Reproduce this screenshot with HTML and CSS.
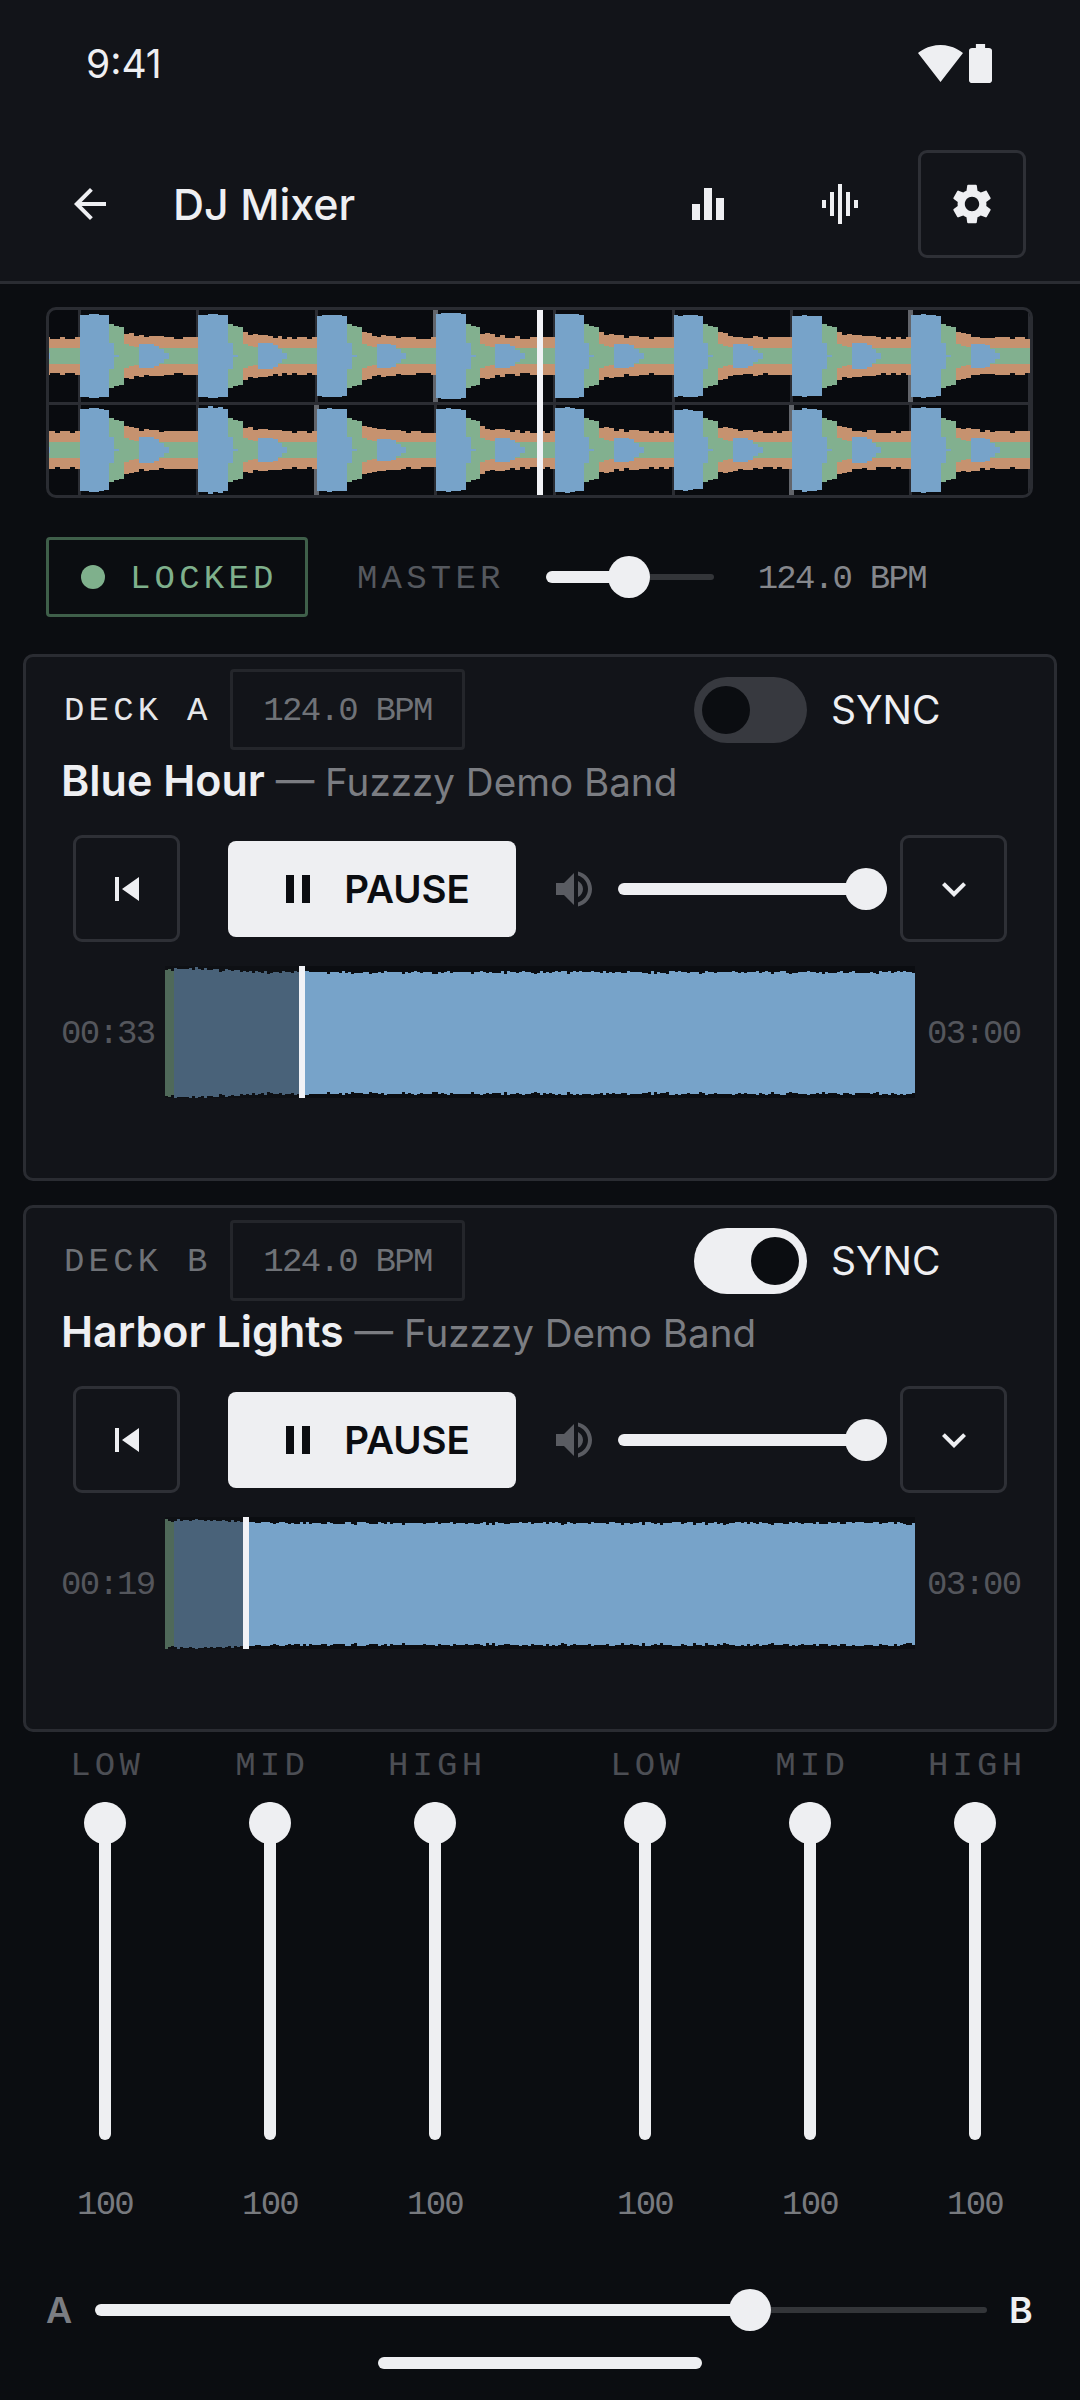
FILE: index.html
```html
<!DOCTYPE html>
<html lang="en">
<head>
    <meta charset="UTF-8">
    <title>DJ Mixer</title>
    <link rel="stylesheet" href="styles.css">
</head>
<body>
<div class="top">
    <div class="status">
        <span class="clock">9:41</span>
        <div class="status-icons">
            <svg class="wifi" viewBox="0.36 3 23.28 18.5" preserveAspectRatio="none"><path d="M12.01 21.49L23.64 7c-.45-.34-4.93-4-11.64-4C5.28 3 .81 6.66.36 7l11.63 14.49.01.01.01-.01z"/></svg>
            <svg class="battery" viewBox="7 2 10 20" preserveAspectRatio="none"><path d="M15.67 4H14V2h-4v2H8.33C7.6 4 7 4.6 7 5.33v15.33C7 21.4 7.6 22 8.33 22h7.33c.74 0 1.34-.6 1.34-1.33V5.33C17 4.6 16.4 4 15.67 4z"/></svg>
        </div>
    </div>
    <div class="appbar">
        <svg class="icon back" viewBox="0 0 24 24"><path d="M20 11H7.83l5.59-5.59L12 4l-8 8 8 8 1.41-1.41L7.83 13H20v-2z"/></svg>
        <h1 class="title">DJ Mixer</h1>
        <div class="icon-btn"><svg class="icon" viewBox="0 0 24 24"><path d="M10 20h4V4h-4v16zm-6 0h4v-8H4v8zM16 9v11h4V9h-4z"/></svg></div>
        <div class="icon-btn"><svg class="icon" viewBox="0 0 24 24"><path d="M7 18h2V6H7v12zm4 4h2V2h-2v20zm-8-8h2v-4H3v4zm12 4h2V6h-2v12zm4-8v4h2v-4h-2z"/></svg></div>
        <div class="icon-btn boxed"><svg class="icon" viewBox="0 0 24 24"><path d="M19.14 12.94c.04-.3.06-.61.06-.94 0-.32-.02-.64-.07-.94l2.03-1.58c.18-.14.23-.41.12-.61l-1.92-3.32c-.12-.22-.37-.29-.59-.22l-2.39.96c-.5-.38-1.03-.7-1.62-.94l-.36-2.54c-.04-.24-.24-.41-.48-.41h-3.84c-.24 0-.43.17-.47.41l-.36 2.54c-.59.24-1.13.57-1.62.94l-2.39-.96c-.22-.08-.47 0-.59.22L2.74 8.87c-.12.21-.08.47.12.61l2.03 1.58c-.05.3-.09.63-.09.94s.02.64.07.94l-2.03 1.58c-.18.14-.23.41-.12.61l1.92 3.32c.12.22.37.29.59.22l2.39-.96c.5.38 1.03.7 1.62.94l.36 2.54c.05.24.24.41.48.41h3.84c.24 0 .44-.17.47-.41l.36-2.54c.59-.24 1.13-.56 1.62-.94l2.39.96c.22.08.47 0 .59-.22l1.92-3.32c.12-.22.07-.47-.12-.61l-2.01-1.58zM12 15.6c-1.98 0-3.6-1.62-3.6-3.6s1.62-3.6 3.6-3.6 3.6 1.62 3.6 3.6-1.62 3.6-3.6 3.6z"/></svg></div>
    </div>
</div>

<div class="overview">
    <svg id="overview" viewBox="0 0 981 185"></svg>
    <div class="overview-head"></div>
</div>

<div class="lock-row">
    <div class="locked"><span class="dot"></span><span class="mono">LOCKED</span></div>
    <span class="mono master">MASTER</span>
    <div class="slider master-slider">
        <div class="fill" style="width:83px"></div><div class="rest"></div>
        <div class="thumb" style="left:83px"></div>
    </div>
    <span class="mono-plain master-bpm">124.0 BPM</span>
</div>

<!-- deck a -->
<div class="deck">
    <div class="deck-head">
        <span class="mono deck-name">DECK A</span>
        <div class="bpm-box mono-plain">124.0 BPM</div>
        <div class="toggle"><span class="knob"></span></div>
        <span class="sync">SYNC</span>
    </div>
    <div class="track"><strong>Blue Hour</strong> — Fuzzzy Demo Band</div>
    <div class="controls">
        <div class="square-btn"><svg class="icon" viewBox="0 0 24 24"><path d="M6 6h2v12H6zm3.5 6l8.5 6V6z"/></svg></div>
        <div class="pause"><svg class="icon" viewBox="0 0 24 24"><path d="M6 19h4V5H6v14zm8-14v14h4V5h-4z"/></svg><span>PAUSE</span></div>
        <svg class="icon vol" viewBox="0 0 24 24"><path d="M3 9v6h4l5 5V4L7 9H3zm13.5 3c0-1.77-1.02-3.29-2.5-4.03v8.05c1.48-.73 2.5-2.25 2.5-4.02zM14 3.23v2.06c2.89.86 5 3.54 5 6.71s-2.11 5.85-5 6.71v2.06c4.01-.91 7-4.49 7-8.77s-2.99-7.86-7-8.77z"/></svg>
        <div class="slider vol-slider">
            <div class="fill" style="width:100%"></div>
            <div class="thumb" style="left:248px"></div>
        </div>
        <div class="square-btn"><svg class="icon" viewBox="0 0 24 24"><path d="M16.59 8.59L12 13.17 7.41 8.59 6 10l6 6 6-6z"/></svg></div>
    </div>
    <div class="wave-row">
        <span class="mono-plain time">00:33</span>
        <div class="wave">
            <svg class="wave-svg" viewBox="0 0 750 132"></svg>
            <div class="played" style="width:134px"></div>
            <div class="playhead" style="left:134px"></div>
        </div>
        <span class="mono-plain time">03:00</span>
    </div>
</div>

<!-- deck b -->
<div class="deck deck-b">
    <div class="deck-head">
        <span class="mono deck-name">DECK B</span>
        <div class="bpm-box mono-plain">124.0 BPM</div>
        <div class="toggle on"><span class="knob"></span></div>
        <span class="sync">SYNC</span>
    </div>
    <div class="track"><strong>Harbor Lights</strong> — Fuzzzy Demo Band</div>
    <div class="controls">
        <div class="square-btn"><svg class="icon" viewBox="0 0 24 24"><path d="M6 6h2v12H6zm3.5 6l8.5 6V6z"/></svg></div>
        <div class="pause"><svg class="icon" viewBox="0 0 24 24"><path d="M6 19h4V5H6v14zm8-14v14h4V5h-4z"/></svg><span>PAUSE</span></div>
        <svg class="icon vol" viewBox="0 0 24 24"><path d="M3 9v6h4l5 5V4L7 9H3zm13.5 3c0-1.77-1.02-3.29-2.5-4.03v8.05c1.48-.73 2.5-2.25 2.5-4.02zM14 3.23v2.06c2.89.86 5 3.54 5 6.71s-2.11 5.85-5 6.71v2.06c4.01-.91 7-4.49 7-8.77s-2.99-7.86-7-8.77z"/></svg>
        <div class="slider vol-slider">
            <div class="fill" style="width:100%"></div>
            <div class="thumb" style="left:248px"></div>
        </div>
        <div class="square-btn"><svg class="icon" viewBox="0 0 24 24"><path d="M16.59 8.59L12 13.17 7.41 8.59 6 10l6 6 6-6z"/></svg></div>
    </div>
    <div class="wave-row">
        <span class="mono-plain time">00:19</span>
        <div class="wave">
            <svg class="wave-svg" viewBox="0 0 750 132"></svg>
            <div class="played" style="width:78px"></div>
            <div class="playhead" style="left:78px"></div>
        </div>
        <span class="mono-plain time">03:00</span>
    </div>
</div>

<div class="eq">
    <div class="eq-col"><span class="mono eq-label">LOW</span><div class="vslider"><span class="vthumb"></span></div><span class="mono-plain eq-val">100</span></div>
    <div class="eq-col"><span class="mono eq-label">MID</span><div class="vslider"><span class="vthumb"></span></div><span class="mono-plain eq-val">100</span></div>
    <div class="eq-col"><span class="mono eq-label">HIGH</span><div class="vslider"><span class="vthumb"></span></div><span class="mono-plain eq-val">100</span></div>
    <div class="eq-gap"></div>
    <div class="eq-col"><span class="mono eq-label">LOW</span><div class="vslider"><span class="vthumb"></span></div><span class="mono-plain eq-val">100</span></div>
    <div class="eq-col"><span class="mono eq-label">MID</span><div class="vslider"><span class="vthumb"></span></div><span class="mono-plain eq-val">100</span></div>
    <div class="eq-col"><span class="mono eq-label">HIGH</span><div class="vslider"><span class="vthumb"></span></div><span class="mono-plain eq-val">100</span></div>
</div>

<div class="xfade">
    <span class="xfade-a">A</span>
    <div class="slider xfade-slider">
        <div class="fill" style="width:655px"></div><div class="rest"></div>
        <div class="thumb" style="left:655px"></div>
    </div>
    <span class="xfade-b">B</span>
</div>

<div class="home-bar"></div>

<script src="wave.js"></script>
</body>
</html>
```

FILE: styles.css
```css
* {
    box-sizing: border-box;
}

html, body {
    margin: 0;
    padding: 0;
}

body {
    width: 1080px;
    height: 2400px;
    overflow: hidden;
    background-color: #0b0d11;
    color: #eeeff2;
    font-family: "Inter", "Liberation Sans", sans-serif;
}

svg {
    display: block;
    fill: currentColor;
}

.icon {
    width: 48px;
    height: 48px;
    flex: none;
}

.mono {
    padding-top: 3px;
    font-family: "Liberation Mono", monospace;
    font-size: 34px;
    letter-spacing: 4.2px;
}

.mono-plain {
    padding-top: 3px;
    font-family: "Liberation Mono", monospace;
    font-size: 34px;
    letter-spacing: -1.7px;
}

/* top */
.top {
    background-color: #121419;
    border-bottom: 3px solid #2a2c32;
}

.status {
    height: 126px;
    display: flex;
    align-items: center;
    justify-content: space-between;
    padding: 0 88px 0 86px;
}

.clock {
    font-size: 39px;
}

.status-icons {
    display: flex;
    align-items: center;
}

.wifi {
    width: 45px;
    height: 37px;
}

.battery {
    width: 23px;
    height: 39px;
    margin-left: 6px;
}

.appbar {
    height: 155px;
    display: flex;
    align-items: center;
    padding: 0 54px 0 66px;
}

.back {
    margin-right: 59px;
}

.title {
    flex: 1;
    margin: 0;
    font-size: 43px;
    font-weight: 500;
}

.icon-btn {
    width: 108px;
    height: 108px;
    margin-left: 24px;
    display: flex;
    align-items: center;
    justify-content: center;
    border: 3px solid transparent;
    border-radius: 9px;
}

.boxed {
    border-color: #2e3036;
}

/* overview */
.overview {
    position: relative;
    width: 987px;
    height: 191px;
    margin: 23px 0 0 46px;
    border: 3px solid #2a2c32;
    border-radius: 10px;
    overflow: hidden;
    background-color: #090b0f;
}

.overview svg {
    width: 981px;
    height: 185px;
}

.overview-head {
    position: absolute;
    top: 0;
    bottom: 0;
    left: 488px;
    width: 6px;
    background-color: #f1f2f6;
}

/* lock row */
.lock-row {
    display: flex;
    align-items: center;
    height: 80px;
    margin: 39px 0 0 46px;
}

.locked {
    width: 262px;
    height: 80px;
    display: flex;
    align-items: center;
    padding-left: 32px;
    border: 3px solid #3f5f4a;
    border-radius: 4px;
    color: #7fb08c;
}

.dot {
    width: 24px;
    height: 24px;
    border-radius: 50%;
    margin-right: 25px;
    background-color: #7fb08c;
}

.master {
    margin-left: 49px;
    color: #55585e;
}

.slider {
    position: relative;
    display: flex;
    align-items: center;
    height: 42px;
}

.fill {
    height: 12px;
    background-color: #eeeff2;
    border-radius: 6px;
}

.rest {
    flex: 1;
    height: 6px;
    background-color: #333539;
    border-radius: 3px;
}

.thumb {
    position: absolute;
    top: 0;
    width: 42px;
    height: 42px;
    margin-left: -21px;
    border-radius: 50%;
    background-color: #eeeff2;
}

.master-slider {
    width: 168px;
    margin-left: 41.5px;
}

.master-bpm {
    margin-left: 43.5px;
    color: #85878c;
}

/* deck */
.deck {
    height: 527px;
    margin: 37px 23px 0;
    padding-top: 12px;
    background-color: #121419;
    border: 3px solid #2a2c32;
    border-radius: 10px;
}

.deck-b {
    margin-top: 24px;
}

.deck-head {
    height: 81px;
    display: flex;
    align-items: center;
    padding-left: 38px;
}

.deck-name {
    width: 166px;
    flex: none;
    color: #e6e7ea;
}

.deck-b .deck-name {
    color: #6f7277;
}

.bpm-box {
    width: 235px;
    height: 81px;
    display: flex;
    align-items: center;
    justify-content: center;
    border: 3px solid #24262b;
    border-radius: 4px;
    color: #6f7277;
}

.toggle {
    width: 113px;
    height: 66px;
    margin-left: 229px;
    padding-left: 8px;
    display: flex;
    align-items: center;
    border-radius: 33px;
    background-color: #37393f;
}

.knob {
    width: 48px;
    height: 48px;
    border-radius: 50%;
    background-color: #0b0d11;
}

.toggle.on {
    background-color: #eeeff2;
    padding-left: 57px;
}

.sync {
    margin-left: 24px;
    font-size: 39px;
}

.track {
    height: 60px;
    padding-left: 35px;
    line-height: 60px;
    font-size: 38.6px;
    white-space: nowrap;
    color: #7b7d82;
}

.track strong {
    font-size: 43px;
    font-weight: 600;
    color: #eeeff2;
}

.controls {
    height: 107px;
    margin-top: 25px;
    padding-left: 47px;
    display: flex;
    align-items: center;
}

.square-btn {
    width: 107px;
    height: 107px;
    flex: none;
    display: flex;
    align-items: center;
    justify-content: center;
    border: 3px solid #2e3036;
    border-radius: 9px;
}

.pause {
    width: 288px;
    height: 96px;
    margin: 0 34px 0 48px;
    display: flex;
    align-items: center;
    justify-content: center;
    gap: 22px;
    font-size: 38.5px;
    font-weight: 600;
    background-color: #eeeff2;
    color: #0b0d11;
    border-radius: 8px;
}

.vol {
    color: #5a5c62;
}

.vol-slider {
    width: 269px;
    margin: 0 13px 0 20px;
}

.wave-row {
    height: 132px;
    margin-top: 24px;
    padding-left: 35px;
    display: flex;
    align-items: center;
}

.time {
    width: 91px;
    color: #54565c;
}

.wave {
    position: relative;
    width: 750px;
    height: 132px;
    margin: 0 12px 0 13px;
    background-color: #0b0d11;
}

.wave-svg {
    width: 750px;
    height: 132px;
}

.played {
    position: absolute;
    top: 0;
    bottom: 0;
    left: 0;
    background-color: rgba(18, 20, 25, 0.45);
}

.playhead {
    position: absolute;
    top: 0;
    bottom: 0;
    width: 6px;
    background-color: #f1f2f6;
}

/* eq */
.eq {
    display: flex;
    padding: 14px 22.5px 0;
}

.eq-col {
    width: 165px;
    display: flex;
    flex-direction: column;
    align-items: center;
}

.eq-gap {
    width: 45px;
}

.eq-label {
    height: 36px;
    padding-top: 2px;
    line-height: 36px;
    margin-right: -4.2px;
    color: #4c4e54;
}

.vslider {
    position: relative;
    width: 12px;
    height: 338px;
    margin-top: 20px;
    border-radius: 6px;
    background-color: #eeeff2;
}

.vthumb {
    position: absolute;
    top: 0;
    left: -15px;
    width: 42px;
    height: 42px;
    border-radius: 50%;
    background-color: #eeeff2;
}

.eq-val {
    height: 36px;
    padding-top: 2px;
    line-height: 36px;
    margin-top: 45px;
    color: #77797e;
}

/* crossfader */
.xfade {
    height: 42px;
    margin-top: 68px;
    display: flex;
    align-items: center;
    padding-left: 46px;
    font-size: 36px;
    font-weight: 600;
}

.xfade-a {
    width: 49px;
    color: #7b7d82;
}

.xfade-slider {
    width: 892px;
}

.xfade-b {
    margin-left: 22px;
}

.home-bar {
    width: 324px;
    height: 12px;
    margin: 26px 0 0 378px;
    border-radius: 6px;
    background-color: #eeeff2;
}
```

FILE: wave.js
```js
// waveforms are drawn from a small seeded generator so they look the same every run
function makeRandom(seed) {
    return function () {
        seed = (seed + 0x6D2B79F5) | 0;
        var t = Math.imul(seed ^ (seed >>> 15), 1 | seed);
        t = (t + Math.imul(t ^ (t >>> 7), 61 | t)) ^ t;
        return ((t ^ (t >>> 14)) >>> 0) / 4294967296;
    };
}

function col(x, w, cy, hh) {
    var h = Math.round(hh);
    return "M" + x + " " + (cy - h) + "h" + w + "v" + (h * 2) + "h-" + w + "z";
}

function addPath(svg, d, color) {
    var p = document.createElementNS("http://www.w3.org/2000/svg", "path");
    p.setAttribute("d", d);
    p.setAttribute("fill", color);
    p.setAttribute("shape-rendering", "crispEdges");
    svg.appendChild(p);
}

function drawOverview() {
    var svg = document.getElementById("overview");
    var rand = makeRandom(41);
    var beat = 118.8, first = 30.5, step = 4.95;
    var lines = "M0 92h981v3h-981z";

    for (var k = 0; k < 9; k++) {
        var bx = Math.round(first + k * beat) - 2;
        lines += "M" + bx + " 0h3v185h-3z";
    }
    addPath(svg, lines, "#2b2d33");
    addPath(svg, "M384 0h5v92h-5zM859 0h5v92h-5zM265 95h5v90h-5zM740 95h5v90h-5z", "#62656b");

    [46, 140].forEach(function (cy) {
        var orange = "", green = "", blue = "";
        for (var b = -1; b < 9; b++) {
            var x0 = first + b * beat;
            var peak = 41 + rand() * 3;
            var bump = 11 + rand() * 2;
            for (var i = 0; i < 24; i++) {
                var t = i * step;
                var x = Math.round(x0 + i * step);
                var w = Math.round(x0 + (i + 1) * step) - x;
                var o = 18 + 7 * Math.exp(-Math.max(t - 40, 0) / 22) + (rand() < 0.35 ? -1.5 : 0.5);
                var g = t < 40 ? 33 - (t - 25) * 0.3 : 7.5 + 9 * Math.exp(-(t - 40) / 7);
                var bl = 0;
                if (t < 25) bl = peak + rand() * 0.8 - (t < 5 ? 2 : t / 10);
                else if (t < 35) bl = 24 * (35 - t) / 10;
                else if (t >= 59 && t < 88) bl = t < 72 ? bump : bump * (88 - t) / 16;
                orange += col(x, w, cy, t < 25 ? 0 : o);
                green += col(x, w, cy, t < 25 ? 0 : g);
                if (bl > 0) blue += col(x, w, cy, bl);
            }
        }
        addPath(svg, orange, "#c6926f");
        addPath(svg, green, "#82b08f");
        addPath(svg, blue, "#77a3c9");
    });
}

function drawDeckWave(svg, seed) {
    var rand = makeRandom(seed);
    var d = "", edge = "";
    for (var x = 0; x < 750; x += 3) {
        var hh = 60 + rand() * 2 - (rand() < 0.15 ? 1.5 : 0);
        if (x < 100) hh += 4 * (1 - x / 100) + rand();
        if (x < 7) edge += col(x, 3, 67, hh - 2);
        else d += col(x, 3, 67, hh);
    }
    addPath(svg, d, "#77a3c9");
    addPath(svg, edge, "#82b08f");
}

drawOverview();
var waves = document.querySelectorAll(".wave-svg");
for (var i = 0; i < waves.length; i++) {
    drawDeckWave(waves[i], 100 + i * 7);
}
```
